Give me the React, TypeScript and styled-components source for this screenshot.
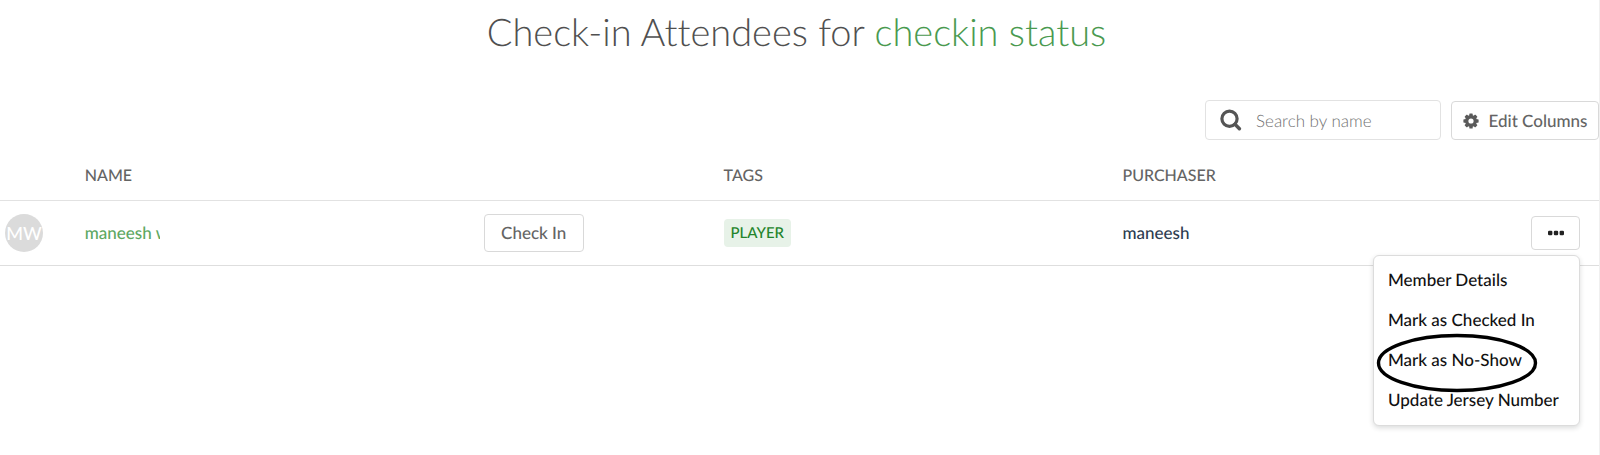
import React from "react";
import styled, { createGlobalStyle } from "styled-components";

const GlobalStyle = createGlobalStyle`
  * { box-sizing: border-box; }
  body { margin: 0; background: #fff; font-family: Lato, "Liberation Sans", sans-serif; font-size: 17px; font-weight: 500; color: #646464; text-rendering: geometricPrecision; }
  button, input { font: inherit; color: inherit; text-rendering: inherit; }
`;

const Page = styled.main`
  min-height: 100vh;
  border-right: 1px solid #f0f0f0;
`;

const Title = styled.h1`
  margin: 0;
  padding: 8px 6px 0 0;
  color: #505050;
  font-size: 38px;
  line-height: 48px;
  font-weight: 300;
  font-variant-ligatures: none;
  text-align: center;
  span { color: #4a9a50; }
`;

const Toolbar = styled.div`
  display: flex;
  justify-content: flex-end;
  align-items: flex-end;
  gap: 10px;
  padding-top: 44px;
`;

const SearchBox = styled.label`
  display: flex;
  align-items: center;
  gap: 14px;
  width: 236px;
  height: 40px;
  padding: 0 14px;
  border: 1px solid #e2e2e2;
  border-radius: 4px;
`;

const SearchInput = styled.input`
  flex: 1;
  min-width: 0;
  padding: 0;
  border: 0;
  outline: 0;
  background: transparent;
  font-weight: 300;
  &::placeholder { color: #707070; opacity: 1; }
`;

const Button = styled.button<{ $width: number; $height: number }>`
  display: inline-flex;
  align-items: center;
  justify-content: center;
  gap: 10px;
  width: ${(p) => p.$width}px;
  height: ${(p) => p.$height}px;
  padding: 0;
  background: #fff;
  border: 1px solid #d9d9d9;
  border-radius: 4px;
  white-space: nowrap;
`;

const Table = styled.table`
  width: 100%;
  table-layout: fixed;
  border-collapse: collapse;
`;

const Col = styled.col<{ $share: number }>`
  width: ${(p) => p.$share}%;
`;

const HeadCell = styled.th`
  height: 60px;
  padding: 0 0 12px;
  vertical-align: bottom;
  text-align: left;
  font-size: 16px;
  line-height: 24px;
  font-weight: 500;
  border-bottom: 1px solid #e2e2e2;
`;

const Cell = styled.td`
  height: 65px;
  padding: 0;
  border-bottom: 1px solid #dedede;
`;

const Avatar = styled.div`
  display: flex;
  align-items: center;
  justify-content: center;
  width: 38px;
  height: 38px;
  margin-left: 5px;
  border-radius: 50%;
  background: #dbdbdb;
  color: #fff;
  font-size: 18px;
`;

const NameLink = styled.a`
  display: block;
  width: 75px;
  overflow: hidden;
  white-space: nowrap;
  color: #5da862;
  text-decoration: none;
`;

const Tag = styled.span`
  display: inline-block;
  padding: 0 7px;
  border-radius: 4px;
  background: #e7f2e8;
  color: #23842b;
  font-size: 15px;
  line-height: 28px;
`;

const Purchaser = styled.span`
  color: #2c3c50;
`;

const Actions = styled.div`
  position: relative;
  display: flex;
  justify-content: flex-end;
  padding-right: 19px;
  color: #222;
`;

const Menu = styled.div`
  position: absolute;
  z-index: 1;
  top: 100%;
  right: 19px;
  width: 207px;
  margin-top: 5px;
  padding: 4px 0 5px;
  background: #fff;
  border: 1px solid #dcdcdc;
  border-radius: 6px;
  box-shadow: 0 2px 5px rgba(34, 36, 38, 0.16);
`;

const MenuItem = styled.button`
  position: relative;
  display: block;
  width: 100%;
  height: 40px;
  padding: 0 14px;
  border: 0;
  background: transparent;
  color: #111;
  text-align: left;
  white-space: nowrap;
`;

const Ring = styled.svg`
  position: absolute;
  left: 2px;
  top: -7px;
  pointer-events: none;
`;

const SearchIcon = () => (
  <svg width="22" height="22" viewBox="0 0 22 22" fill="none" stroke="#555" aria-hidden="true">
    <circle cx="9.5" cy="9.8" r="7.6" strokeWidth="3.2" />
    <path d="M15 15.3l4.4 4.4" strokeWidth="3.4" strokeLinecap="round" />
  </svg>
);

const CogIcon = () => (
  <svg width="16" height="16" viewBox="0 0 16 16" aria-hidden="true">
    <g fill="#5a5a5a">
      {[0, 45, 90, 135].map((a) => (
        <rect key={a} x="6.3" y="0.4" width="3.4" height="15.2" rx="0.6" transform={`rotate(${a} 8 8)`} />
      ))}
      <circle cx="8" cy="8" r="6" />
    </g>
    <circle cx="8" cy="8" r="2.6" fill="#fff" />
  </svg>
);

const DotsIcon = () => (
  <svg width="16" height="6" viewBox="0 0 16 6" fill="#222" aria-hidden="true">
    {[0, 5.8, 11.6].map((x) => (
      <rect key={x} x={x} y="0.8" width="4.4" height="4.4" rx="1.2" />
    ))}
  </svg>
);

const columns = [5.3, 24.95, 15, 24.95, 24, 5.8];
const headings = ["", "NAME", "", "TAGS", "PURCHASER", ""];
const actions = ["Member Details", "Mark as Checked In", "Mark as No-Show", "Update Jersey Number"];

export default function App() {
  return (
    <Page>
      <GlobalStyle />
      <Title>
        Check-in Attendees for <span>checkin status</span>
      </Title>
      <Toolbar>
        <SearchBox>
          <SearchIcon />
          <SearchInput type="text" placeholder="Search by name" aria-label="Search by name" />
        </SearchBox>
        <Button $width={148} $height={39}>
          <CogIcon />
          Edit Columns
        </Button>
      </Toolbar>
      <Table>
        <colgroup>
          {columns.map((share, i) => (
            <Col key={i} $share={share} />
          ))}
        </colgroup>
        <thead>
          <tr>
            {headings.map((text, i) => (
              <HeadCell key={i}>{text}</HeadCell>
            ))}
          </tr>
        </thead>
        <tbody>
          <tr>
            <Cell><Avatar>MW</Avatar></Cell>
            <Cell><NameLink href="#member">maneesh w</NameLink></Cell>
            <Cell><Button $width={100} $height={38}>Check In</Button></Cell>
            <Cell><Tag>PLAYER</Tag></Cell>
            <Cell><Purchaser>maneesh</Purchaser></Cell>
            <Cell>
              <Actions>
                <Button $width={49} $height={34} aria-label="More actions" aria-expanded="true">
                  <DotsIcon />
                </Button>
                <Menu>
                  {actions.map((label) => (
                    <MenuItem key={label}>
                      {label}
                      {label === "Mark as No-Show" && (
                        <Ring width="162" height="60" viewBox="0 0 162 60" fill="none" aria-hidden="true">
                          <ellipse cx="81" cy="30" rx="78.5" ry="27.5" stroke="#000" strokeWidth="3.4" />
                        </Ring>
                      )}
                    </MenuItem>
                  ))}
                </Menu>
              </Actions>
            </Cell>
          </tr>
        </tbody>
      </Table>
    </Page>
  );
}
